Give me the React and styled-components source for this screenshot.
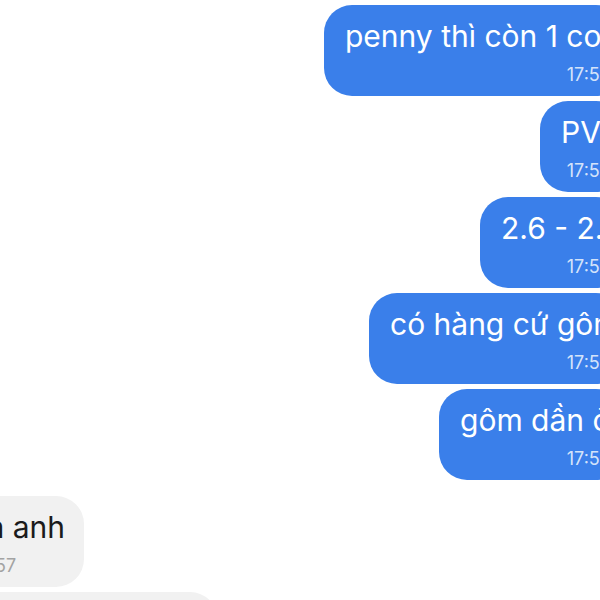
import React from "react";
import styled, { createGlobalStyle } from "styled-components";

const GlobalStyle = createGlobalStyle`
  html, body {
    margin: 0;
    padding: 0;
    background: #ffffff;
    overflow: hidden;
  }
  body {
    font-family: Inter, "Noto Sans", "DejaVu Sans", sans-serif;
    -webkit-font-smoothing: antialiased;
  }
`;

const Screen = styled.div`
  width: 600px;
  height: 600px;
  overflow: hidden;
  background: #ffffff;
`;

const Thread = styled.div`
  display: flex;
  flex-direction: column;
  gap: 5px;
  padding-top: 5px;
  margin-right: -24px;
  margin-left: -48px;
`;

const Row = styled.div`
  display: flex;
  justify-content: ${(p) => (p.$mine ? "flex-end" : "flex-start")};
  margin-top: ${(p) => (p.$gapBefore ? 11 : 0)}px;
`;

const Bubble = styled.div`
  box-sizing: border-box;
  width: ${(p) => p.$w}px;
  height: 91px;
  padding: 13px ${(p) => (p.$mine ? 14 : 19)}px 10px 21px;
  border-radius: 28px;
  background: ${(p) => (p.$mine ? "#3a7fea" : "#f1f1f1")};
  color: ${(p) => (p.$mine ? "#ffffff" : "#1b1b1b")};
  display: flex;
  flex-direction: column;
  overflow: hidden;
`;

const Text = styled.div`
  display: flex;
  justify-content: ${(p) => (p.$mine ? "flex-start" : "flex-end")};
  font-size: 30px;
  line-height: 36px;
  white-space: nowrap;
`;

const Time = styled.div`
  margin-top: 10px;
  font-size: 18px;
  line-height: 22px;
  white-space: nowrap;
  text-align: ${(p) => (p.$mine ? "right" : "left")};
  color: ${(p) => (p.$mine ? "rgba(255,255,255,0.8)" : "#a3a3a3")};
`;

const messages = [
  { mine: true, w: 300, text: "penny thì còn 1 con", time: "17:57" },
  { mine: true, w: 84, text: "PV", time: "17:57" },
  { mine: true, w: 144, text: "2.6 - 2.7", time: "17:57" },
  { mine: true, w: 255, text: "có hàng cứ gôm", time: "17:57" },
  { mine: true, w: 185, text: "gôm dần ở", time: "17:57" },
  { mine: false, w: 132, text: "vâng a anh", time: "17:57", gapBefore: true },
  { mine: false, w: 266, text: "để em xem lại", time: "17:58" },
];

export default function App() {
  return (
    <Screen>
      <GlobalStyle />
      <Thread>
        {messages.map((m, i) => (
          <Row key={i} $mine={m.mine} $gapBefore={m.gapBefore}>
            <Bubble $mine={m.mine} $w={m.w}>
              <Text $mine={m.mine}>
                <span>{m.text}</span>
              </Text>
              <Time $mine={m.mine}>{m.time}</Time>
            </Bubble>
          </Row>
        ))}
      </Thread>
    </Screen>
  );
}
